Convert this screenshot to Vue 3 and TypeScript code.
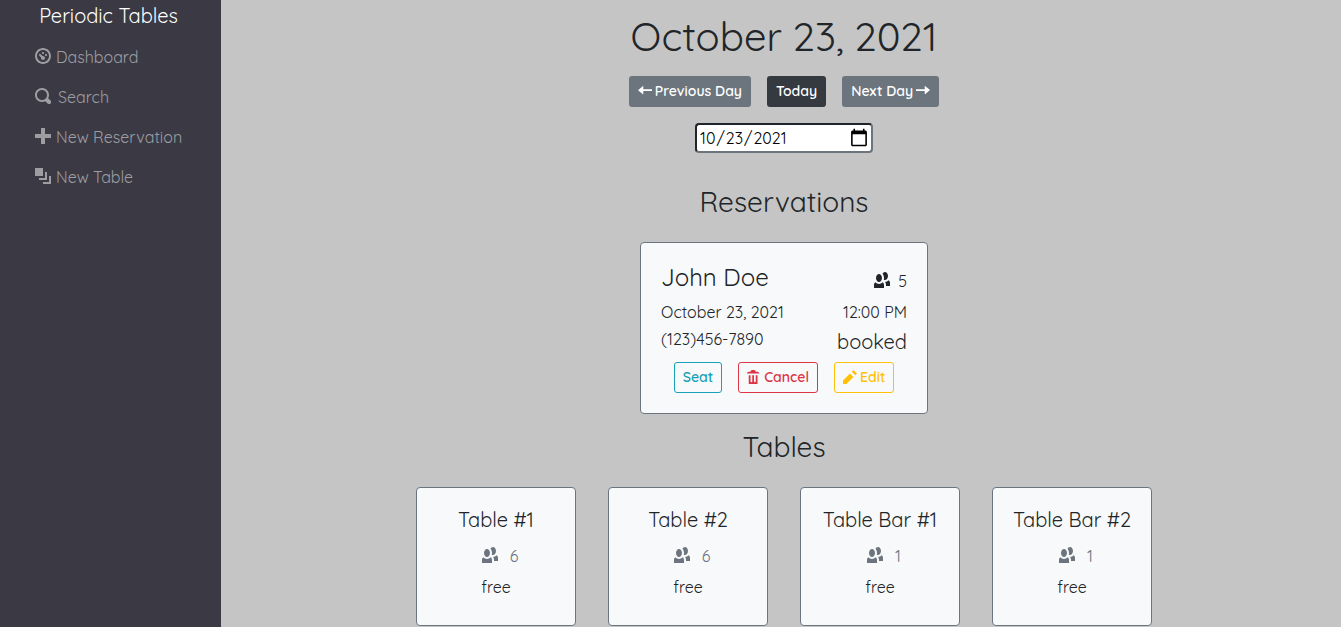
<script setup lang="ts">
import { ref } from 'vue'

const icons = {
  dashboard:
    'M4 0c-2.2 0-4 1.8-4 4s1.8 4 4 4 4-1.8 4-4-1.8-4-4-4zm0 1c1.66 0 3 1.34 3 3s-1.34 3-3 3-3-1.34-3-3 1.34-3 3-3zm0 1c-.28 0-.5.22-.5.5s.22.5.5.5.5-.22.5-.5-.22-.5-.5-.5zm-1.66 1a.5.5 0 0 0-.19.84l.91.91c-.02.08-.06.16-.06.25 0 .55.45 1 1 1s1-.45 1-1-.45-1-1-1c-.09 0-.17.04-.25.06l-.91-.91a.5.5 0 0 0-.44-.16.5.5 0 0 0-.06 0zm3.16 0c-.28 0-.5.22-.5.5s.22.5.5.5.5-.22.5-.5-.22-.5-.5-.5z',
  search:
    'M3.5 0c-1.93 0-3.5 1.57-3.5 3.5s1.57 3.5 3.5 3.5c.59 0 1.17-.14 1.66-.41a1 1 0 0 0 .13.13l1 1a1.02 1.02 0 1 0 1.44-1.44l-1-1a1 1 0 0 0-.16-.13c.27-.49.44-1.06.44-1.66 0-1.93-1.55-3.5-3.5-3.5zm0 1c1.39 0 2.5 1.11 2.5 2.5 0 .66-.24 1.27-.66 1.72-.01.01-.02.02-.03.03a1 1 0 0 0-.13.13c-.44.4-1.04.63-1.69.63-1.39 0-2.5-1.11-2.5-2.5s1.11-2.5 2.5-2.5z',
  plus: 'M3 0v3h-3v2h3v3h2v-3h3v-2h-3v-3h-2z',
  layers: 'M0 0v4h4v-4h-4zm5 2v3h-3v1h4v-4h-1zm2 2v3h-3v1h4v-4h-1z',
  people:
    'M5.5 0c-.51 0-.95.35-1.22.88.45.54.72 1.28.72 2.13 0 .29-.03.55-.09.81.19.11.38.19.59.19.83 0 1.5-.9 1.5-2s-.67-2-1.5-2zm-3 1c-.83 0-1.5.9-1.5 2s.67 2 1.5 2 1.5-.9 1.5-2-.67-2-1.5-2zm4.75 3.16c-.43.51-1.02.82-1.69.84.27.38.44.84.44 1.34v.66h2v-1.66c0-.52-.31-.97-.75-1.19zm-6.5 1c-.44.22-.75.67-.75 1.19v1.66h5v-1.66c0-.52-.31-.97-.75-1.19-.45.53-1.06.84-1.75.84s-1.3-.32-1.75-.84z',
  trash:
    'M3 0c-.55 0-1 .45-1 1h-1c-.55 0-1 .45-1 1h7c0-.55-.45-1-1-1h-1c0-.55-.45-1-1-1h-1zm-2 3v4.81c0 .11.08.19.19.19h4.63c.11 0 .19-.08.19-.19v-4.81h-1v3.5c0 .28-.22.5-.5.5s-.5-.22-.5-.5v-3.5h-1v3.5c0 .28-.22.5-.5.5s-.5-.22-.5-.5v-3.5h-1z',
  pencil: 'M6 0l-1 1 2 2 1-1-2-2zm-2 2l-4 4v2h2l4-4-2-2z',
  arrowLeft: 'M3 1l-3 2.53 3 2.47v-2h5v-1h-5v-2z',
  arrowRight: 'M5 1v2h-5v1h5v2l3-2.53-3-2.47z',
}

const links = [
  { label: 'Dashboard', icon: icons.dashboard },
  { label: 'Search', icon: icons.search, spaced: true },
  { label: 'New Reservation', icon: icons.plus },
  { label: 'New Table', icon: icons.layers },
]

const date = ref<string>('2021-10-23')

const tables = [
  { name: 'Table #1', capacity: 6, status: 'free' },
  { name: 'Table #2', capacity: 6, status: 'free' },
  { name: 'Table Bar #1', capacity: 1, status: 'free' },
  { name: 'Table Bar #2', capacity: 1, status: 'free' },
]
</script>

<template>
  <div class="layout">
    <aside class="sidebar">
      <a class="brand" href="#">Periodic Tables</a>
      <nav class="nav">
        <a v-for="link in links" :key="link.label" class="nav-link" :class="{ spaced: link.spaced }" href="#">
          <svg class="icon" viewBox="0 0 8 8" aria-hidden="true"><path :d="link.icon" /></svg>
          <span>{{ link.label }}</span>
        </a>
      </nav>
    </aside>

    <main class="main">
      <h1 class="title">October 23, 2021</h1>
      <div class="actions">
        <button type="button" class="btn secondary">
          <svg class="icon small" viewBox="0 0 8 8" aria-hidden="true"><path :d="icons.arrowLeft" /></svg>
          <span>Previous Day</span>
        </button>
        <button type="button" class="btn dark">Today</button>
        <button type="button" class="btn secondary">
          <span>Next Day</span>
          <svg class="icon small" viewBox="0 0 8 8" aria-hidden="true"><path :d="icons.arrowRight" /></svg>
        </button>
      </div>
      <input v-model="date" class="date" type="date" aria-label="Reservation date" />

      <h2 class="heading reservations-heading">Reservations</h2>
      <article class="card reservation">
        <div class="row">
          <h3 class="name">John Doe</h3>
          <div class="party">
            <svg class="icon" viewBox="0 0 8 8" aria-hidden="true"><path :d="icons.people" /></svg>
            <span>5</span>
          </div>
        </div>
        <div class="row">
          <span>October 23, 2021</span>
          <span>12:00 PM</span>
        </div>
        <div class="row">
          <span>(123)456-7890</span>
          <span class="status">booked</span>
        </div>
        <div class="actions card-actions">
          <a class="btn info" href="#">Seat</a>
          <button type="button" class="btn danger">
            <svg class="icon small" viewBox="0 0 8 8" aria-hidden="true"><path :d="icons.trash" /></svg>
            <span>Cancel</span>
          </button>
          <a class="btn warning" href="#">
            <svg class="icon small" viewBox="0 0 8 8" aria-hidden="true"><path :d="icons.pencil" /></svg>
            <span>Edit</span>
          </a>
        </div>
      </article>

      <h2 class="heading tables-heading">Tables</h2>
      <div class="tables">
        <article v-for="table in tables" :key="table.name" class="card table-card">
          <h3 class="table-name">{{ table.name }}</h3>
          <div class="capacity">
            <svg class="icon" viewBox="0 0 8 8" aria-hidden="true"><path :d="icons.people" /></svg>
            <span>{{ table.capacity }}</span>
          </div>
          <div class="free">{{ table.status }}</div>
        </article>
      </div>
    </main>
  </div>
</template>

<style>
body {
  margin: 0;
  background: #c5c5c5;
}
</style>

<style scoped>
.layout {
  display: flex;
  min-height: 100vh;
  box-sizing: border-box;
  font-family: Quicksand, Inter, sans-serif;
  font-size: 16px;
  font-weight: 400;
  line-height: 24px;
  color: #212529;
}
.layout * {
  box-sizing: border-box;
}
.icon {
  width: 16px;
  height: 16px;
  margin-bottom: 2px;
  fill: currentColor;
  flex: none;
}
.icon.small {
  width: 14px;
  height: 14px;
  margin-bottom: 0;
}
.sidebar {
  flex: none;
  width: 221px;
  background: #3b3a44;
}
.brand {
  display: block;
  padding: 4px 4px 9px 0;
  text-align: center;
  font-size: 20px;
  color: #fff;
  text-decoration: none;
}
.nav-link {
  display: flex;
  align-items: center;
  gap: 5px;
  height: 40px;
  padding-left: 35px;
  color: #9d9da2;
  text-decoration: none;
}
.nav-link.spaced {
  gap: 7px;
}
.main {
  flex: 1;
  min-width: 0;
  display: flex;
  flex-direction: column;
  align-items: center;
  padding: 12px 0 1px 6px;
}
.title,
.heading,
.name,
.table-name {
  margin: 0;
  font-weight: 400;
}
.title {
  font-size: 40px;
  line-height: 48px;
}
.actions {
  display: flex;
  gap: 16px;
  margin-top: 16px;
}
.btn {
  display: inline-flex;
  align-items: center;
  justify-content: center;
  gap: 3px;
  height: 31px;
  padding: 0 8px 2px;
  border: 1px solid transparent;
  border-radius: 3px;
  font: inherit;
  font-size: 14px;
  font-weight: 600;
  text-decoration: none;
  cursor: pointer;
}
.secondary {
  background: #6c757d;
  color: #fff;
}
.dark {
  background: #343a40;
  color: #fff;
}
.info {
  border-color: #17a2b8;
  color: #17a2b8;
}
.danger {
  border-color: #dc3545;
  background: transparent;
  color: #dc3545;
}
.warning {
  border-color: #ffc107;
  color: #ffc107;
}
.date {
  width: 178px;
  height: 30px;
  margin-top: 16px;
  padding: 1px 2px;
  border: 2px solid;
  border-color: #212529 #6c757d #6c757d #212529;
  border-radius: 4px;
  background: #fff;
  color: #000;
  font: inherit;
}
.date::-webkit-calendar-picker-indicator {
  width: 20px;
  height: 20px;
  padding: 0;
}
.heading {
  font-size: 28px;
  line-height: 34px;
}
.reservations-heading {
  margin: 32px 0 23px;
}
.tables-heading {
  margin: 16px 0 23px;
}
.card {
  border: 1px solid #6c757d;
  border-radius: 4px;
  background: #f8f9fa;
}
.reservation {
  width: 288px;
  padding: 20px;
}
.row {
  display: flex;
  justify-content: space-between;
  height: 27px;
}
.name {
  font-size: 24px;
  line-height: 29px;
}
.row:first-child {
  height: 37px;
}
.party,
.capacity {
  display: flex;
  align-items: center;
}
.party {
  gap: 8px;
  height: 36px;
}
.status {
  font-size: 20px;
  line-height: 30px;
}
.card-actions {
  justify-content: center;
  margin-top: 8px;
}
.tables {
  display: flex;
  flex-wrap: wrap;
  justify-content: center;
  gap: 32px;
}
.table-card {
  width: 160px;
  height: 139px;
  padding: 20px 0;
  text-align: center;
}
.table-name {
  font-size: 20px;
  line-height: 24px;
}
.capacity {
  justify-content: center;
  gap: 12px;
  margin-top: 12px;
  padding-left: 8px;
  color: #6c757d;
}
.free {
  margin-top: 7px;
}
</style>
